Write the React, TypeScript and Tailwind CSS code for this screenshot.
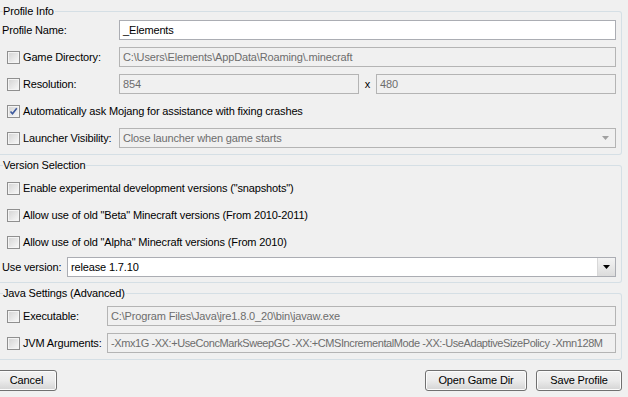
import React from 'react';

function CheckBox({ checked = false }: { checked?: boolean }) {
  return (
    <div className="w-[13px] h-[13px] shrink-0 border border-[#8f8f8f] bg-[#f4f4f4] p-px">
      <div className="w-full h-full bg-gradient-to-br from-[#d6d6d6] to-[#f6f6f6] relative">
        {checked && (
          <svg viewBox="0 0 11 11" className="absolute -left-px -top-px w-[11px] h-[11px]">
            <path d="M2.5 5.5 L4.5 7.8 L8.8 2.2" fill="none" stroke="#3d5a9e" strokeWidth="1.6" />
          </svg>
        )}
      </div>
    </div>
  );
}

function Field({
  value,
  enabled = false,
  className = '',
}: {
  value: string;
  enabled?: boolean;
  className?: string;
}) {
  return (
    <div
      className={`min-w-0 h-[20px] flex items-center px-[3px] border overflow-hidden whitespace-nowrap ${
        enabled
          ? 'bg-white border-[#abadb3] text-black'
          : 'bg-[#f0f0f0] border-[#b4b4b4] text-[#6d6d6d]'
      } ${className}`}
    >
      {value}
    </div>
  );
}

function Arrow({ color }: { color: string }) {
  return (
    <svg width="7" height="4" viewBox="0 0 7 4">
      <path d="M0 0 L7 0 L3.5 4 Z" fill={color} />
    </svg>
  );
}

function Button({ label, className = '' }: { label: string; className?: string }) {
  return (
    <div
      className={`h-[21px] flex items-center justify-center rounded-[3px] border border-[#707070] bg-gradient-to-b from-[#f2f2f2] via-[#ebebeb] to-[#d4d4d4] text-black shadow-[inset_0_0_0_1px_#fcfcfc] ${className}`}
    >
      {label}
    </div>
  );
}

function Section({ title, children, className = '' }: { title: string; children: React.ReactNode; className?: string }) {
  return (
    <fieldset
      className={`min-w-0 border-y border-r border-l-0 border-[#d5dfe5] rounded-r-[3px] mr-[6px] ${className}`}
    >
      <legend className="ml-[3px] leading-[13px] pr-[1px] text-black">{title}</legend>
      {children}
    </fieldset>
  );
}

function CheckLabel({ label, checked = false, width }: { label: string; checked?: boolean; width?: string }) {
  return (
    <div className={`flex items-center pl-[7px] gap-[3px] shrink-0 ${width ?? ''}`}>
      <CheckBox checked={checked} />
      <span>{label}</span>
    </div>
  );
}

export default function App() {
  return (
    <div className="w-[628px] h-[397px] bg-[#f0f0f0] overflow-hidden font-['Liberation_Sans',Arial,sans-serif] text-[11px] tracking-[-0.15px] text-black">
      <Section title="Profile Info" className="mt-[5px]">
        <div className="flex flex-col gap-[7px] pt-[2px] pb-[6px] pr-[5px]">
          <div className="flex items-center h-[20px]">
            <span className="w-[119px] shrink-0 pl-[2px]">Profile Name:</span>
            <Field value="_Elements" enabled className="flex-1" />
          </div>
          <div className="flex items-center h-[20px]">
            <CheckLabel label="Game Directory:" width="w-[119px]" />
            <Field value="C:\Users\Elements\AppData\Roaming\.minecraft" className="flex-1" />
          </div>
          <div className="flex items-center h-[20px]">
            <CheckLabel label="Resolution:" width="w-[119px]" />
            <Field value="854" className="w-[240px]" />
            <span className="w-[17px] text-center">x</span>
            <Field value="480" className="flex-1" />
          </div>
          <div className="flex items-center h-[20px]">
            <CheckLabel label="Automatically ask Mojang for assistance with fixing crashes" checked />
          </div>
          <div className="flex items-center h-[20px]">
            <CheckLabel label="Launcher Visibility:" width="w-[119px]" />
            <div className="flex-1 h-[20px] flex items-center justify-between pl-[3px] pr-[6px] border border-[#b4b4b4] bg-[#f0f0f0] text-[#6d6d6d]">
              <span>Close launcher when game starts</span>
              <Arrow color="#a0a0a0" />
            </div>
          </div>
        </div>
      </Section>

      <Section title="Version Selection" className="mt-[4px]">
        <div className="flex flex-col gap-[7px] pt-[6px] pb-[5px] pr-[5px]">
          <div className="flex items-center h-[20px]">
            <CheckLabel label={'Enable experimental development versions ("snapshots")'} />
          </div>
          <div className="flex items-center h-[20px]">
            <CheckLabel label={'Allow use of old "Beta" Minecraft versions (From 2010-2011)'} />
          </div>
          <div className="flex items-center h-[20px]">
            <CheckLabel label={'Allow use of old "Alpha" Minecraft versions (From 2010)'} />
          </div>
          <div className="flex items-center h-[20px] mt-[-2px]">
            <span className="w-[67px] shrink-0 pl-[2px]">Use version:</span>
            <div className="flex-1 h-[20px] flex items-stretch border border-[#abadb3] bg-white">
              <span className="flex-1 flex items-center pl-[3px]">release 1.7.10</span>
              <div className="w-[18px] flex items-center justify-center border-l border-[#d8d8d8] bg-gradient-to-b from-[#f4f4f4] to-[#dcdcdc]">
                <Arrow color="#000" />
              </div>
            </div>
          </div>
        </div>
      </Section>

      <Section title="Java Settings (Advanced)" className="mt-[4px]">
        <div className="flex flex-col gap-[7px] pt-[6px] pb-[6px] pr-[5px]">
          <div className="flex items-center h-[20px]">
            <CheckLabel label="Executable:" width="w-[107px]" />
            <Field value="C:\Program Files\Java\jre1.8.0_20\bin\javaw.exe" className="flex-1" />
          </div>
          <div className="flex items-center h-[20px]">
            <CheckLabel label="JVM Arguments:" width="w-[107px]" />
            <Field
              value="-Xmx1G -XX:+UseConcMarkSweepGC -XX:+CMSIncrementalMode -XX:-UseAdaptiveSizePolicy -Xmn128M"
              className="flex-1 tracking-[-0.42px]"
            />
          </div>
        </div>
      </Section>

      <div className="flex items-center mt-[10px] pr-[6px]">
        <Button label="Cancel" className="w-[61px] ml-[-4px]" />
        <div className="flex-1" />
        <Button label="Open Game Dir" className="w-[102px]" />
        <Button label="Save Profile" className="w-[86px] ml-[9px]" />
      </div>
    </div>
  );
}
